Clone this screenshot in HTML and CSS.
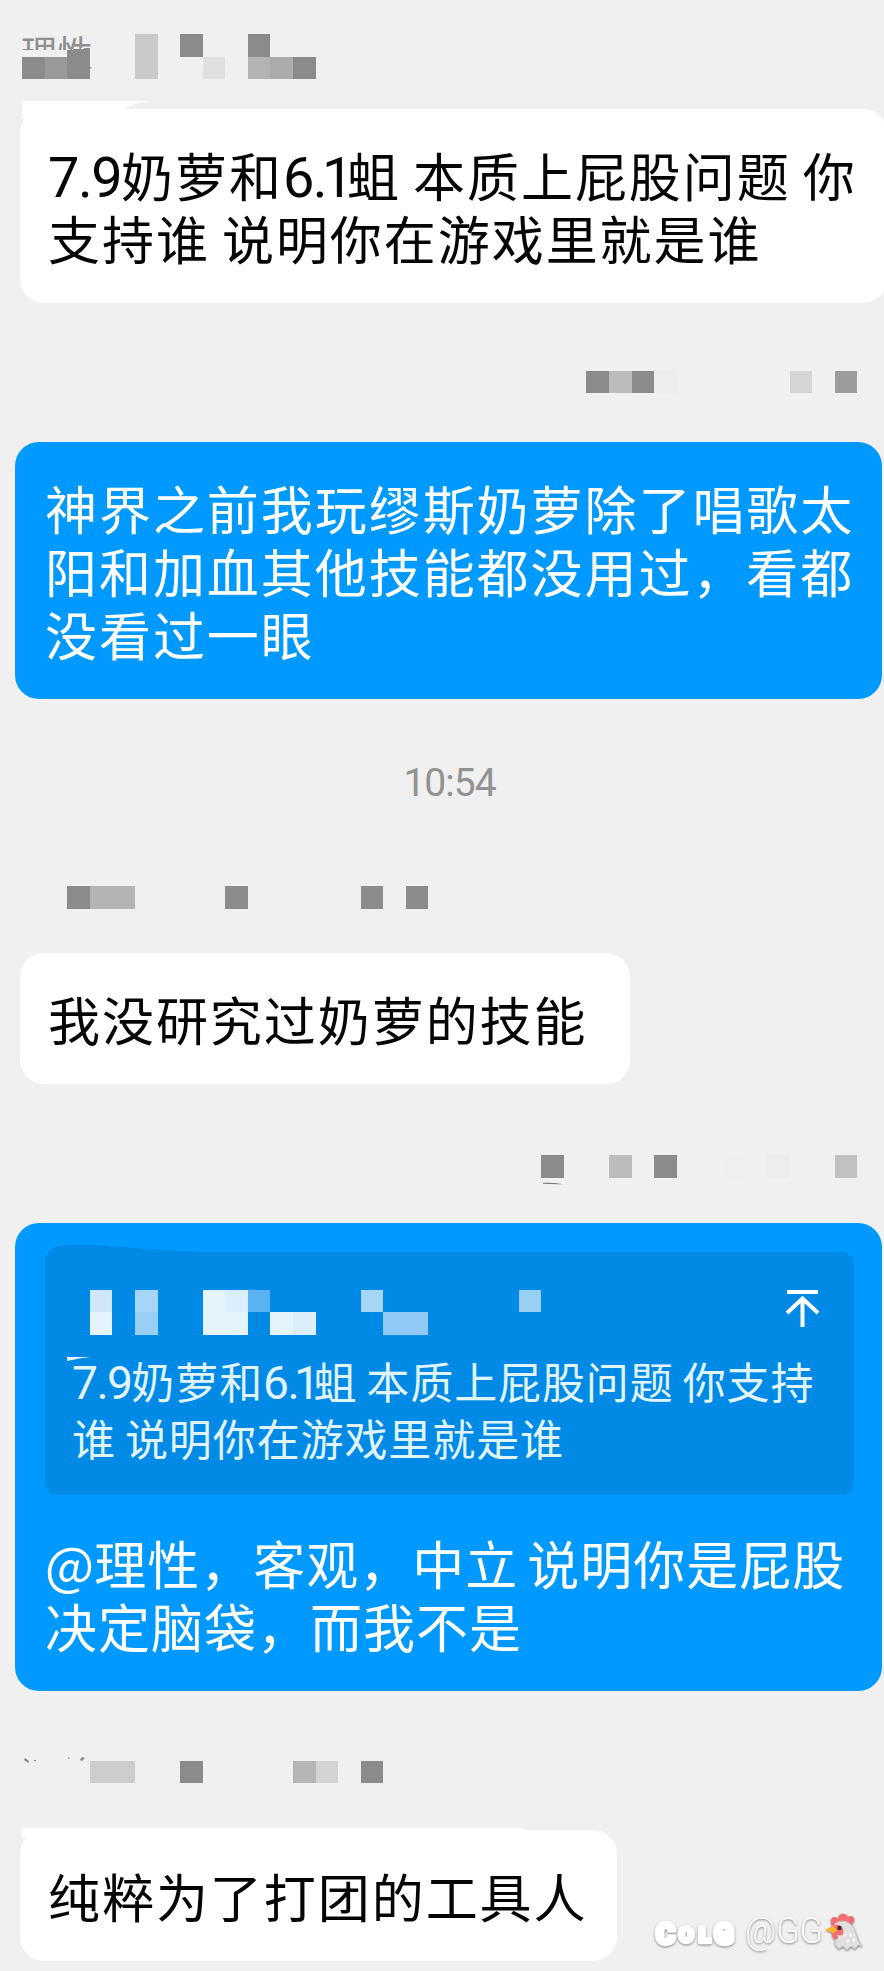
FILE: index.html
```html
<!DOCTYPE html>
<html lang="zh-CN">
<head>
<meta charset="utf-8">
<title>聊天记录</title>
<link rel="stylesheet" href="styles.css">
</head>
<body>
<main class="chat">
  <header class="name name-first">
    <span class="name-text">理性</span>
    <svg class="mosaic" width="884" height="46" viewBox="0 0 884 46" shape-rendering="crispEdges">
      <path fill="#f0f0f0" d="M20 16h47l28-3v20H20z"/>
      <path fill="#8b8b8b" d="M22 23h23v22H22zM67 16l23-2v31H67zM180 0h23v23h-23zM248 0h22v23h-22zM293 23h23v22h-23z"/>
      <path fill="#999" d="M45 23h22v22H45z"/>
      <path fill="#c9c9c9" d="M135 0h23v45h-23z"/>
      <path fill="#e0e0e0" d="M203 23h22v22h-22z"/>
      <path fill="#b3b3b3" d="M248 23h22v22h-22z"/>
      <path fill="#acacac" d="M270 23h23v22h-23z"/>
    </svg>
  </header>

  <section class="bubble in wide">
    <svg class="smear" width="140" height="20" viewBox="0 0 140 20"><path fill="#fff" d="M2 0h127q-17 3-25 8v10H2z"/></svg>
    <p class="text"><span class="num">7.9</span>奶萝和<span class="num">6.<span class="one">1</span></span>蛆 本质上屁股问题 你<br>支持谁 说明你在游戏里就是谁</p>
  </section>

  <header class="name name-second">
    <svg class="mosaic" width="884" height="22" viewBox="0 0 884 22" shape-rendering="crispEdges">
      <path fill="#8b8b8b" d="M586 0h23v22h-23zM632 0h22v22h-22z"/>
      <path fill="#bbb" d="M609 0h23v22h-23z"/>
      <path fill="#ededed" d="M654 0h23v22h-23z"/>
      <path fill="#d5d5d5" d="M790 0h22v22h-22z"/>
      <path fill="#9c9c9c" d="M835 0h22v22h-22z"/>
    </svg>
  </header>

  <section class="bubble out three">
    <p class="text">神界之前我玩缪斯奶萝除了唱歌太<br>阳和加血其他技能都没用过，看都<br>没看过一眼</p>
  </section>

  <time class="time">10:54</time>

  <header class="name name-third">
    <svg class="mosaic" width="884" height="23" viewBox="0 0 884 23" shape-rendering="crispEdges">
      <path fill="#8b8b8b" d="M67 0h23v23H67zM225 0h23v23h-23zM361 0h22v23h-22zM406 0h22v23h-22z"/>
      <path fill="#b4b4b4" d="M90 0h45v23H90z"/>
    </svg>
  </header>

  <section class="bubble in mid">
    <p class="text">我没研究过奶萝的技能</p>
  </section>

  <header class="name name-fourth">
    <svg class="mosaic" width="884" height="30" viewBox="0 0 884 30">
      <g shape-rendering="crispEdges">
        <path fill="#8b8b8b" d="M541 0h23v23h-23zM654 0h23v23h-23z"/>
        <path fill="#bcbcbc" d="M609 0h23v23h-23z"/>
        <path fill="#efefef" d="M723 0h22v23h-22z"/>
        <path fill="#ededed" d="M767 0h23v23h-23z"/>
        <path fill="#c1c1c1" d="M835 0h22v23h-22z"/>
      </g>
      <path fill="#777" d="M543 27.8q10-.4 20 1.4-10 .2-20-.4z"/>
    </svg>
  </header>

  <section class="bubble out reply">
    <div class="quote">
      <svg class="quote-edge" width="200" height="120" viewBox="0 0 200 120">
        <path fill="#008ae6" d="M1 118V12Q7 1 20 0h32q60 5 105 7v12H20v99z"/>
      </svg>
      <svg class="quote-name" width="809" height="74" viewBox="45 1290 809 74">
        <g shape-rendering="crispEdges">
          <path fill="#d0e7fa" d="M90 1290h22v22H90z"/>
          <path fill="#e5f3fd" d="M90 1312h22v23H90zM203 1290h45v45h-45zM270 1312h46v23h-46z"/>
          <path fill="#a6d6f7" d="M135 1290h23v22h-23zM361 1290h22v22h-22z"/>
          <path fill="#98cff5" d="M135 1312h23v23h-23zM519 1290h22v22h-22z"/>
          <path fill="#daeefc" d="M225 1290h23v22h-23zM293 1312h23v23h-23z"/>
          <path fill="#59b2f1" d="M248 1290h22v22h-22z"/>
          <path fill="#90c9f6" d="M383 1312h45v23h-45z"/>
        </g>
        <path fill="#e4f5fe" d="M67 1357h23q-10 1-23 4z"/>
        <path fill="none" stroke="#fff" stroke-width="4" d="M787 1292h31M802.500 1327v-28M787 1313l15.500-14.500L818 1313"/>
      </svg>
      <p class="quote-text"><span class="num">7.9</span>奶萝和<span class="num">6.<span class="one">1</span></span>蛆 本质上屁股问题 你支持<br>谁 说明你在游戏里就是谁</p>
    </div>
    <p class="text answer"><span class="at">@</span>理性，客观，中立 说明你是屁股<br>决定脑袋，而我不是</p>
  </section>

  <header class="name name-fifth">
    <svg class="mosaic" width="884" height="28" viewBox="0 1755 884 28">
      <path fill="#888" d="M25 1758l4 3-1 2-4-3zM34 1760h2v1h-2zM67 1757l3 1-1 1zM82 1757l3 1-3 3-2-1z"/>
      <g shape-rendering="crispEdges">
        <path fill="#cdcdcd" d="M90 1761h45v22H90z"/>
        <path fill="#8b8b8b" d="M180 1761h23v22h-23zM361 1761h22v22h-22z"/>
        <path fill="#b5b5b5" d="M293 1761h23v22h-23z"/>
        <path fill="#d3d3d3" d="M316 1761h22v22h-22z"/>
      </g>
    </svg>
  </header>

  <section class="bubble in last">
    <svg class="smear smear-last" width="510" height="12" viewBox="0 0 510 12"><path fill="#fff" d="M2 0h497l8 2v8H2z"/></svg>
    <p class="text">纯粹为了打团的工具人</p>
  </section>

  <svg class="watermark" width="220" height="50" viewBox="650 1905 220 50">
    <g class="brand">
      <text x="656" y="1944" font-size="29">C</text>
      <text x="679" y="1942" font-size="21">O</text>
      <text x="699" y="1942" font-size="21">L</text>
      <text x="714" y="1944" font-size="29">G</text>
    </g>
    <text class="user" x="745" y="1943" textLength="78" lengthAdjust="spacingAndGlyphs">@GG</text>
    <g>
      <path fill="#f46f73" d="M831 1923c-1-7 5-7 7-4 0-6 8-7 10-2 5-3 8 2 5 6l-6 5h-14z"/>
      <path fill="#e0e0e0" stroke="#c3c3c3" d="M835 1924c7-6 17-2 20 7 2 5 3 11 7 15l-4-1-3 4-4-3-4 4-4-4-4 3-4-5c2-7-2-11-2-16z"/>
      <path fill="#f46f73" d="M831 1931c-1-7 10-9 12-2s-3 7-6 6c3 4-1 6-4 3z"/>
      <path fill="#fbb72a" d="M825 1930l8-4 4 4-3 3z"/>
      <circle cx="839.500" cy="1928" r="2.200" fill="#402b2b"/>
      <path fill="none" stroke="#fff" stroke-width="1.500" stroke-linecap="round" d="M845 1934v2M850 1934l1 2M848 1940v2M854 1939v2"/>
    </g>
  </svg>
</main>
</body>
</html>
```
FILE: styles.css
```css
* { box-sizing: border-box; }

body {
  margin: 0;
  background: #f0f0f0;
  font-family: "Noto Sans CJK SC", "Noto Sans", sans-serif;
}

.chat {
  position: relative;
  display: flex;
  flex-direction: column;
  align-items: flex-start;
  width: 884px;
  height: 1971px;
  overflow: hidden;
}

p { margin: 0; white-space: nowrap; }
svg { display: block; }

.name { position: relative; flex: none; width: 884px; }
.name .mosaic { position: relative; }
.name-first { height: 46px; margin-top: 34px; }
.name-second { height: 22px; margin-top: 68px; }
.name-third { height: 23px; margin-top: 85px; }
.name-fourth { height: 30px; margin-top: 71px; }
.name-fifth { height: 28px; margin-top: 64px; }

.name-text {
  position: absolute;
  left: 21px;
  top: -3px;
  font-size: 36px;
  line-height: 40px;
  color: #8f8f8f;
}

.bubble {
  position: relative;
  flex: none;
  border-radius: 24px;
}
.in { margin-left: 20px; padding: 33.5px 28px 0; background: #fff; color: #050505; }
.out { margin-left: 15px; padding: 33.5px 30px 0; background: #0099ff; color: #fff; width: 867px; }

.wide { width: 867px; height: 194px; margin-top: 29px; }
.three { height: 257px; margin-top: 49px; }
.mid { width: 610px; height: 131px; margin-top: 44px; }
.reply { height: 468px; margin-top: 38px; padding-top: 29px; }
.last { width: 597px; height: 131px; margin-top: 47px; }

.text {
  font-size: 52px;
  line-height: 63.3px;
  letter-spacing: 1.95px;
  word-spacing: -1.5px;
}

.num {
  font-family: Roboto, sans-serif;
  font-size: 1.075em;
  line-height: 0;
  letter-spacing: -1.5px;
}
.one { margin-left: -4px; margin-right: -5px; }

.smear { position: absolute; left: 0; top: -8px; }
.smear-last { top: -2px; }

.time {
  align-self: center;
  margin-top: 60px;
  margin-left: 15px;
  height: 42px;
  font: 39px/48px Roboto, sans-serif;
  letter-spacing: -1px;
  color: #929292;
}

.quote {
  position: relative;
  width: 809px;
  height: 243px;
  padding-top: 38px;
  border-radius: 12px;
  background: #008ae6;
}
.quote-edge { position: absolute; left: -1px; top: -7px; }
.quote-name { position: relative; margin-bottom: -12.5px; }
.quote-text {
  position: relative;
  padding-left: 27px;
  font-size: 43px;
  line-height: 57.7px;
  letter-spacing: 0.9px;
  word-spacing: -1.5px;
  color: #e0f4ff;
}
.quote .num { letter-spacing: -1.6px; }
.answer { margin-top: 36px; letter-spacing: 1px; word-spacing: -3.5px; }
.at { letter-spacing: 0; }

.watermark {
  position: absolute;
  left: 650px;
  top: 1905px;
  filter: drop-shadow(0 1px 1px rgba(0, 0, 0, 0.45));
}
.brand {
  font-family: Roboto, sans-serif;
  font-weight: 900;
  fill: #fff;
  stroke: #fff;
  stroke-width: 4.5px;
  stroke-linejoin: round;
}
.user { font: 300 36px Roboto, sans-serif; fill: #fff; }
```
